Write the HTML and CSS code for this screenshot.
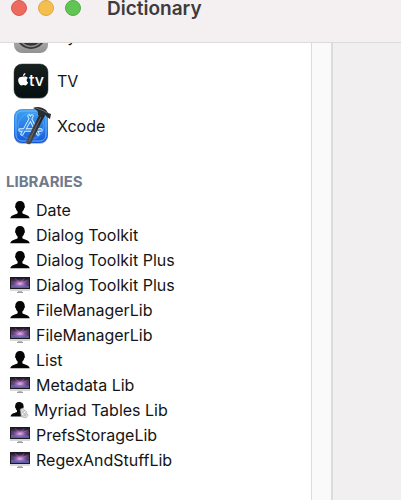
FILE: index.html
```
<!DOCTYPE html>
<html lang="en">

<head>
    <meta charset="UTF-8">
    <meta name="viewport" content="width=device-width, initial-scale=1.0">
    <title>Dictionary</title>
    <link rel="stylesheet" href="styles.css">
</head>

<body>
    <svg class="defs" aria-hidden="true">
        <defs>
            <linearGradient id="space" x1="0" y1="0" x2="0" y2="1">
                <stop offset="0" stop-color="#1d1824" />
                <stop offset=".4" stop-color="#5a3f6b" />
                <stop offset="1" stop-color="#3a2f5c" />
            </linearGradient>
            <radialGradient id="aurora" cx=".5" cy=".6" r=".5">
                <stop offset="0" stop-color="#f6c0f2" />
                <stop offset=".4" stop-color="#bd78c8" stop-opacity=".8" />
                <stop offset="1" stop-color="#6a4790" stop-opacity="0" />
            </radialGradient>
            <linearGradient id="metal" x1="0" y1="0" x2="0" y2="1">
                <stop offset="0" stop-color="#d0d0d0" />
                <stop offset="1" stop-color="#929292" />
            </linearGradient>
            <linearGradient id="tv-bg" x1="0" y1="0" x2="0" y2="1">
                <stop offset="0" stop-color="#17211f" />
                <stop offset="1" stop-color="#071010" />
            </linearGradient>
            <linearGradient id="blue" x1="0" y1="0" x2="0" y2="1">
                <stop offset="0" stop-color="#3ba3f3" />
                <stop offset="1" stop-color="#1859dc" />
            </linearGradient>
            <linearGradient id="handle" x1="0" y1="0" x2="1" y2="0">
                <stop offset="0" stop-color="#55575a" />
                <stop offset="1" stop-color="#17191b" />
            </linearGradient>
        </defs>
        <symbol id="user" viewBox="0 0 20 18">
            <path d="M10 0C6.9 0 5.2 2 5.3 5c-.5.3-.3 1.8.5 2.3.3 1.5.9 2.5 1.8 3.2v1.7C6.5 13.300.5 13.8.3 17.3h19.4c-.2-3.5-6.2-4-7.300-5.1v-1.7c.9-.7 1.5-1.7 1.8-3.2.8-.5 1-2 .5-2.3C14.8 2 13.1 0 10 0z" fill="#050505" />
        </symbol>
        <symbol id="display" viewBox="0 0 20 18">
            <path d="M8 14h4l.5 2.500h-5z" fill="#bcbcbc" />
            <path d="M7 16h6v1H7z" fill="#9c9c9c" />
            <rect x="0" y="1" width="20" height="14" fill="#d8d8d8" />
            <rect x="0" y="1" width="20" height="12" fill="#1c1921" />
            <rect x="1" y="2" width="18" height="10" fill="url(#space)" />
            <ellipse cx="10" cy="7" rx="9" ry="5" fill="url(#aurora)" />
            <path d="M10 7 5 2.500M10.500 7 14 2.500M11 7l6.500-2.500" fill="none" stroke="#d99be0" stroke-width=".6" opacity=".6" />
            <path d="M1 8.600c2.600.8 5.200.2 8 .2s6 .2 10 1V12H1z" fill="#6f77c4" opacity=".6" />
        </symbol>
        <symbol id="user-script" viewBox="0 0 20 18">
            <path d="M9 1C6.4 1 5.1 2.7 5.2 5.2c-.4.3-.2 1.5.4 1.9.2 1.1.7 1.9 1.4 2.4v1.3C5.9 12 .9 12.2.6 15.6h12L15 11l-3.1-1V9c.7-.5 1.1-1.2 1.3-2.1.6-.4.7-1.6.3-1.9C13.7 2.6 11.6 1 9 1z" fill="#090909" />
            <path d="m10.2 8.3 2.6-1.2 5.3 7.2-2 2.5-4.8-1z" fill="#dedede" stroke="#9b9b9b" stroke-width=".6" />
            <path d="m11 13 4-3.5 1.6 1.1-4 4.1z" fill="#f7f7f7" stroke="#999" stroke-width=".5" />
            <path d="m11.3 9.5 4.2 5M13.5 15.5l3.3-2.8" stroke="#aaa" stroke-width=".6" />
        </symbol>
    </svg>

    <div class="window">
        <header class="titlebar">
            <div class="controls">
                <button class="control close" type="button" aria-label="Close"></button>
                <button class="control minimize" type="button" aria-label="Minimize"></button>
                <button class="control zoom" type="button" aria-label="Zoom"></button>
            </div>
            <h1>Dictionary</h1>
        </header>

        <main class="content">
            <nav class="sidebar">
                <ul class="apps">
                    <li class="app">
                        <svg class="app-icon" viewBox="0 0 40 40">
                            <rect x="3" y="3" width="34" height="34" rx="8" fill="url(#metal)" />
                            <circle cx="20" cy="18" r="15" fill="#353535" />
                            <circle cx="20" cy="18" r="12.5" fill="none" stroke="#8b8b8b" stroke-width="1.5" />
                            <circle cx="20" cy="18" r="8" fill="#191919" stroke="#999" stroke-width="2" />
                            <path d="M20 18V8M20 18l9 5M20 18l-9 5" stroke="#aaa" stroke-width="2" />
                        </svg>
                        <span>System Events</span>
                    </li>
                    <li class="app">
                        <svg class="app-icon" viewBox="0 0 40 40">
                            <rect x="3" y="4" width="34" height="34" rx="8" fill="#aaa" opacity=".5" />
                            <rect x="3" y="3" width="34" height="34" rx="8" fill="url(#tv-bg)" stroke="#303b38" stroke-width=".5" />
                            <path d="M13 15.7c-1.2-.6-2.1.3-2.8.3-1.2-.2-3.2.6-3 3.6.1 2.4 1.8 4.8 3.1 4.8.8 0 1.3-.5 2.2-.5s1.2.5 2 .5c1.2-.1 2.3-2.1 2.6-3-1.8-.9-2-3.3-.3-4.3-.9-1.3-2.3-1.8-3.8-1.4zM12 15c-.1-1.6 1-2.8 2.4-3 .1 1.6-1 2.9-2.4 3z" fill="#fff" />
                            <text class="tv-text" x="18" y="25">tv</text>
                        </svg>
                        <span>TV</span>
                    </li>
                    <li class="app">
                        <svg class="app-icon" viewBox="0 0 40 40">
                            <rect x="3" y="4" width="34" height="34" rx="8" fill="#8e9aae" opacity=".6" />
                            <rect x="3" y="3" width="34" height="34" rx="8" fill="url(#blue)" />
                            <rect x="5" y="5" width="30" height="30" rx="6" fill="none" stroke="#81c4fb" stroke-width=".8" />
                            <circle cx="20" cy="20" r="13" fill="none" stroke="#65b0f8" stroke-width=".6" />
                            <g fill="none" stroke-linecap="round">
                                <path d="m18 10 9 18M21 10 11 28M9 24h21" stroke="#e2f4ff" stroke-width="3.4" />
                                <path d="m18 10 9 18M21 10 11 28M9 24h21" stroke="#368ee9" stroke-width="1.6" />
                            </g>
                            <path d="m29 7 5 2-14 28c-1 2.500-6 1-5-1.500z" fill="url(#handle)" />
                            <path d="M22 2c4-2 9-1 13 2l2 3 3 1-1 5-3-2-2-2-2 0-1 2-4-2 0-3c-1-2-3-3-5-4z" fill="#292c30" />
                            <path d="m25 2 8 3 3 2M30 11 18 35" fill="none" stroke="#73777c" stroke-width=".8" />
                        </svg>
                        <span>Xcode</span>
                    </li>
                </ul>

                <h2>LIBRARIES</h2>
                <ul class="libraries">
                    <li class="library"><svg class="icon"><use href="#user" /></svg><span>Date</span></li>
                    <li class="library"><svg class="icon"><use href="#user" /></svg><span>Dialog Toolkit</span></li>
                    <li class="library"><svg class="icon"><use href="#user" /></svg><span>Dialog Toolkit Plus</span></li>
                    <li class="library"><svg class="icon"><use href="#display" /></svg><span>Dialog Toolkit Plus</span></li>
                    <li class="library"><svg class="icon"><use href="#user" /></svg><span>FileManagerLib</span></li>
                    <li class="library"><svg class="icon"><use href="#display" /></svg><span>FileManagerLib</span></li>
                    <li class="library"><svg class="icon"><use href="#user" /></svg><span>List</span></li>
                    <li class="library"><svg class="icon"><use href="#display" /></svg><span>Metadata Lib</span></li>
                    <li class="library scripted"><svg class="icon"><use href="#user-script" /></svg><span>Myriad Tables Lib</span></li>
                    <li class="library"><svg class="icon"><use href="#display" /></svg><span>PrefsStorageLib</span></li>
                    <li class="library"><svg class="icon"><use href="#display" /></svg><span>RegexAndStuffLib</span></li>
                </ul>
            </nav>
            <div class="gutter"></div>
            <section class="detail"></section>
        </main>
    </div>
</body>

</html>
```
FILE: styles.css
```
:root {
    --chrome: #f4f0f2;
    --line: #dddbdc;
    --text: #151515;
    --heading: #6f7b8d;
}

* {
    box-sizing: border-box;
}

body {
    margin: 0;
    color: var(--text);
    background: #fff;
    font-family: Inter, "Liberation Sans", sans-serif;
    font-size: 16px;
}

.defs {
    position: absolute;
    width: 0;
    height: 0;
}

.window {
    display: flex;
    flex-direction: column;
    height: 100vh;
    overflow: hidden;
}

.titlebar {
    display: flex;
    flex-shrink: 0;
    align-items: flex-start;
    gap: 26px;
    height: 43px;
    padding-left: 11px;
    background: var(--chrome);
    border-bottom: 1px solid var(--line);
}

.controls {
    display: flex;
    gap: 11px;
}

.control {
    width: 16px;
    height: 16px;
    padding: 0;
    border: 1px solid;
    border-radius: 50%;
}

.close {
    background: #ed6a5e;
    border-color: #d9584e;
}

.minimize {
    background: #f5bf4f;
    border-color: #dfa83d;
}

.zoom {
    background: #61c554;
    border-color: #51ad43;
}

h1 {
    margin: 0;
    color: #3d3b3d;
    font-size: 19px;
    font-weight: 600;
    line-height: 17px;
}

.content {
    display: flex;
    flex: 1;
    min-height: 0;
}

.sidebar {
    width: 312px;
    overflow: hidden;
    border-right: 1px solid var(--line);
}

ul {
    margin: 0;
    padding: 0;
    list-style: none;
}

/* the list is scrolled so its first row sits partly under the title bar */
.apps {
    margin-top: -30px;
}

.app {
    display: flex;
    align-items: center;
    gap: 6px;
    height: 45px;
    padding-left: 11px;
}

.app-icon {
    width: 40px;
    height: 40px;
}

.tv-text {
    fill: #fff;
    font-size: 16px;
    font-weight: 500;
}

h2 {
    margin: 25px 0 6px;
    padding-left: 6px;
    color: var(--heading);
    font-size: 15px;
    font-weight: 700;
    line-height: 18px;
}

.library {
    display: flex;
    align-items: center;
    gap: 6px;
    height: 25px;
    padding-left: 10px;
}

.scripted {
    gap: 4px;
}

.icon {
    width: 20px;
    height: 18px;
}

.gutter {
    width: 21px;
    background: #fafafa;
    border-right: 2px solid var(--line);
}

.detail {
    flex: 1;
    background: #f1eff0;
}
```
